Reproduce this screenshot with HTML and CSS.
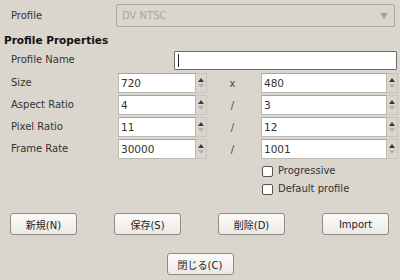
FILE: index.html
```html
<!DOCTYPE html>
<html lang="ja">
<head>
  <meta charset="UTF-8">
  <title>Profile</title>
  <link rel="stylesheet" href="styles.css">
</head>
<body>
  <div class="dialog">
    <div class="profile-row">
      <span class="label">Profile</span>
      <div class="combo"><span>DV NTSC</span><i class="down"></i></div>
    </div>
    <div class="heading">Profile Properties</div>
    <div class="name-row">
      <span class="label">Profile Name</span>
      <div class="name-input"><i class="caret"></i></div>
    </div>
    <div class="grid">
      <span class="label">Size</span>
      <div class="spin"><span class="val">720</span><span class="arrows"><i class="up"></i><i class="dn"></i></span></div>
      <span class="sep">x</span>
      <div class="spin"><span class="val">480</span><span class="arrows"><i class="up"></i><i class="dn"></i></span></div>

      <span class="label">Aspect Ratio</span>
      <div class="spin"><span class="val">4</span><span class="arrows"><i class="up"></i><i class="dn"></i></span></div>
      <span class="sep">/</span>
      <div class="spin"><span class="val">3</span><span class="arrows"><i class="up"></i><i class="dn"></i></span></div>

      <span class="label">Pixel Ratio</span>
      <div class="spin"><span class="val">11</span><span class="arrows"><i class="up"></i><i class="dn"></i></span></div>
      <span class="sep">/</span>
      <div class="spin"><span class="val">12</span><span class="arrows"><i class="up"></i><i class="dn"></i></span></div>

      <span class="label">Frame Rate</span>
      <div class="spin"><span class="val">30000</span><span class="arrows"><i class="up"></i><i class="dn"></i></span></div>
      <span class="sep">/</span>
      <div class="spin"><span class="val">1001</span><span class="arrows"><i class="up"></i><i class="dn"></i></span></div>
    </div>
    <div class="checks">
      <label class="check"><i class="box"></i>Progressive</label>
      <label class="check"><i class="box"></i>Default profile</label>
    </div>
    <div class="buttons">
      <button class="btn">新規(N)</button>
      <button class="btn">保存(S)</button>
      <button class="btn">削除(D)</button>
      <button class="btn">Import</button>
    </div>
    <div class="close-row">
      <button class="btn">閉じる(C)</button>
    </div>
  </div>
</body>
</html>
```

FILE: styles.css
```css
body {
  margin: 0;
  background: #dad6ce;
  font-family: 'DejaVu Sans', 'Noto Sans CJK JP', sans-serif;
  font-size: 10px;
  color: #333;
}

.dialog {
  width: 400px;
  height: 280px;
  overflow: hidden;
}

.label {
  line-height: 20px;
}

.profile-row {
  display: flex;
  align-items: center;
  padding: 4px 0 0 11px;
}

.profile-row .label {
  width: 105px;
}

.combo {
  border: 1px solid #aca89f;
  border-radius: 2px;
  display: flex;
  align-items: center;
  justify-content: space-between;
  padding: 0 6px 0 5px;
  box-sizing: border-box;
  width: 279px;
  height: 23px;
  color: #aaa69e;
}

.down {
  width: 0;
  height: 0;
  border-left: 4px solid transparent;
  border-right: 4px solid transparent;
  border-top: 6px solid #a5a199;
}

.heading {
  font-weight: bold;
  font-size: 10.5px;
  padding: 6px 0 0 4px;
  line-height: 14px;
  color: #111;
}

.name-row {
  display: flex;
  align-items: center;
  padding: 3px 0 0 11px;
}

.name-row .label {
  width: 163px;
}

.name-input {
  width: 223px;
  height: 19px;
  box-sizing: border-box;
  border: 1px solid #6e6c68;
  border-radius: 1px;
  background: #fff;
  display: flex;
  align-items: center;
  padding-left: 3px;
}

.caret {
  width: 1px;
  height: 13px;
  background: #222;
}

.grid {
  display: grid;
  grid-template-columns: 107px 89px 54px 137px;
  grid-auto-rows: 20px;
  row-gap: 2px;
  padding: 3px 0 0 11px;
  align-items: center;
}

.sep {
  text-align: center;
  margin-left: -3px;
  color: #444;
}

.spin {
  display: flex;
  height: 20px;
}

.val {
  flex: 1;
  background: #fff;
  border: 1px solid #bdb9b1;
  border-top-color: #a9a59d;
  box-sizing: border-box;
  padding-left: 2px;
  line-height: 18px;
  font-size: 10.5px;
}

.arrows {
  width: 11px;
  display: flex;
  flex-direction: column;
  align-items: center;
  justify-content: space-around;
  padding: 3px 0;
  box-sizing: border-box;
  border: 1px solid #c9c5bd;
  border-left: none;
}

.up {
  width: 0;
  height: 0;
  border-left: 3px solid transparent;
  border-right: 3px solid transparent;
  border-bottom: 4px solid #3a3a3a;
}

.dn {
  width: 0;
  height: 0;
  border-left: 3px solid transparent;
  border-right: 3px solid transparent;
  border-top: 4px solid #b5b1a9;
}

.checks {
  display: flex;
  flex-direction: column;
  gap: 4px;
  padding: 5px 0 0 262px;
}

.check {
  display: flex;
  align-items: center;
  gap: 5px;
  line-height: 14px;
}

.box {
  width: 9px;
  height: 9px;
  border: 1px solid #55534f;
  border-radius: 2px;
  background: #fff;
}

.buttons {
  display: flex;
  gap: 37px;
  padding: 17px 0 0 10px;
}

.btn {
  width: 67px;
  height: 22px;
  font-family: 'DejaVu Sans', 'Noto Sans CJK JP', sans-serif;
  font-size: 10px;
  color: #222;
  background: linear-gradient(#fbfbfa, #ebe9e5);
  border: 1px solid #8f8c86;
  border-radius: 3px;
  padding: 0;
}

.close-row {
  display: flex;
  justify-content: center;
  padding-top: 18px;
}
```
